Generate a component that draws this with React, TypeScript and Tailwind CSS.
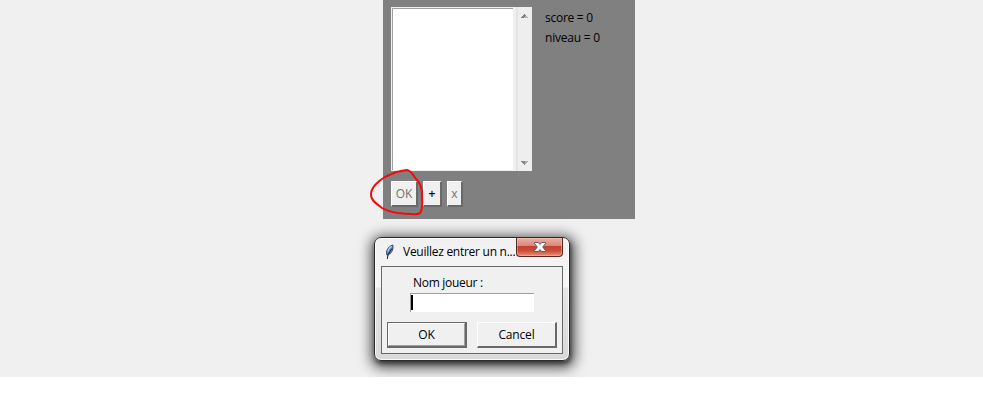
import React from 'react';

function Arrow({ down = false }: { down?: boolean }) {
  return (
    <svg width="8" height="4" viewBox="0 0 8 4" shapeRendering="crispEdges" className="-ml-[2px]">
      {down ? (
        <>
          <path d="M1 0h7v1H7v1H6v1H5v1H4V3H3V2H2V1H1z" fill="#a8a8a8" />
          <path d="M1 0h4v4H4V3H3V2H2V1H1z" fill="#888888" />
        </>
      ) : (
        <>
          <path d="M4 0h1v1h1v1h1v1h1v1H1V3h1V2h1V1h1z" fill="#808080" />
          <path d="M5 2h2v1h1v1H4V3h1z" fill="#b4b4b4" />
        </>
      )}
    </svg>
  );
}

function Feather() {
  return (
    <svg width="12" height="18" viewBox="0 0 12 18">
      <path d="M2.800 11.800C1.800 8.500 3.600 3.600 8.800 2c.8 3.200-.4 7.600-4.300 9.800z" fill="#5b96dc" stroke="#27374d" strokeWidth="0.900" />
      <path d="M3.900 8.500C4.300 6 5.800 4.300 7.600 3.300" fill="none" stroke="#b4d6f6" strokeWidth="1.200" />
      <path d="M7.800 5.500L4 11.500l-.7 4.500" fill="none" stroke="#111820" strokeWidth="1" />
    </svg>
  );
}

const raised = 'flex items-center justify-center bg-[#f0f0f0] border-t border-l border-t-white border-l-white border-r-2 border-b-2 border-r-[#696969] border-b-[#696969]';

function GamePanel() {
  return (
    <div className="relative ml-[383px] flex h-[219px] w-[252px] shrink-0 bg-[#808080] pl-2 pt-[7px]">
      <div className="flex w-[141px] shrink-0 flex-col">
        <div className="flex h-[164px] bg-[#f0f0f0]">
          <div className="h-[164px] w-[123px] border border-[#f0f0f0]">
            <div className="h-full w-full border-l border-t border-[#a0a0a0] bg-white" />
          </div>
          <div className="ml-0.5 flex w-4 flex-col items-center justify-between border-l-2 border-[#e3e3e3] bg-[#eeeeee] pb-1.5 pt-[7px]">
            <Arrow />
            <Arrow down />
          </div>
        </div>
        <div className="mt-2.5 flex h-[26px]">
          <button className={raised + ' w-[27px] text-[#707070]'}><span className="tracking-[-0.2px]">OK</span></button>
          <button className={raised + ' ml-[5px] w-[19px] text-black font-semibold'}><span>+</span></button>
          <button className={raised + ' ml-[5px] w-[16px] text-[#707070]'}>x</button>
        </div>
      </div>
      <div className="ml-[13px] flex flex-col whitespace-nowrap leading-5">
        <span className="mt-px tracking-[-0.27px]">score = 0</span>
        <span className="tracking-[-0.22px]">niveau = 0</span>
      </div>
      <svg className="absolute left-[-15px] top-[166px]" width="60" height="52" viewBox="368 166 60 52" fill="none" stroke="#fa0509" strokeWidth="2" strokeLinejoin="round" strokeLinecap="round">
        <path d="M407 170C400 170.500 391 174 385 177C378 181 370.500 188 371 195C371 201 377 204 382 208C387 211 395 213 403 213.500C409 214 417 215.500 420 213C423 210 422.500 202 422 195C422 187 420 183 417 180C414 177 411 170 407 170Z" />
      </svg>
    </div>
  );
}

function Dialog() {
  return (
    <div className="ml-[374px] mt-[18px] flex h-[124px] w-[196px] shrink-0 flex-col rounded-[7px] border border-[#2b2b2b] bg-[linear-gradient(180deg,#f0f0f0_0%,#f7f7f7_40%,#e6e6e6_41%,#d9d9d9_100%)] shadow-[1px_3px_4px_0px_rgba(0,0,0,0.45),1px_3px_13px_4px_rgba(0,0,0,0.65),inset_0_0_0_1px_rgba(255,255,255,0.8)]">
      <div className="flex h-7 pl-[9px]">
        <div className="mt-[5px] w-3"><Feather /></div>
        <span className="ml-[7px] mt-[5px] w-[113px] whitespace-nowrap leading-[18px] tracking-[-0.27px]">Veuillez entrer un n...</span>
        <button className="flex h-[19px] w-[47px] shrink-0 items-center justify-center rounded-b-[4px] border border-t-0 border-[#5b2722] bg-[linear-gradient(180deg,#e9b0a6_0%,#d98578_45%,#c2422d_46%,#cd4a34_70%,#e4917c_100%)] shadow-[inset_0_0_0_1px_rgba(255,205,190,0.4)]">
          <svg width="14" height="12" viewBox="0 0 14 12">
            <path d="M1.500 1.500h3.800l1.700 1.900 1.700-1.900h3.800v1L9.700 6l2.800 3.500v1H8.700L7 8.600 5.300 10.500H1.500v-1L4.300 6 1.500 2.500z" fill="#fafafa" stroke="#555c68" strokeWidth="1" />
          </svg>
        </button>
      </div>
      <div className="ml-[6px] flex h-[88px] w-[182px] flex-col border border-[#696969] bg-[#f0f0f0]">
        <span className="ml-[31px] mt-[7px] h-[19px] whitespace-nowrap leading-[18px] tracking-[-0.3px]">Nom joueur :</span>
        <div className="ml-7 h-[19px] w-[124px] border-l border-t border-[#a0a0a0] bg-white">
          <div className="mt-px h-[15px] w-0.5 bg-black" />
        </div>
        <div className="ml-[5px] mt-2.5 flex h-[26px] gap-2.5">
          <div className="flex h-[26px] w-20 border border-b-2 border-r-2 border-[#696969]">
            <button className="flex w-full items-center justify-center border border-b-[#a0a0a0] border-l-white border-r-[#a0a0a0] border-t-white bg-[#f0f0f0] tracking-[-0.2px]">OK</button>
          </div>
          <button className={raised + ' w-20 tracking-[-0.15px]'}>Cancel</button>
        </div>
      </div>
    </div>
  );
}

export default function App() {
  return (
    <div className="h-[407px] w-[983px] bg-white font-['Open_Sans','Noto_Sans',sans-serif] text-[12px] text-black">
      <div className="flex h-[377px] flex-col overflow-hidden bg-[#f0f0f0]">
        <GamePanel />
        <Dialog />
      </div>
    </div>
  );
}
